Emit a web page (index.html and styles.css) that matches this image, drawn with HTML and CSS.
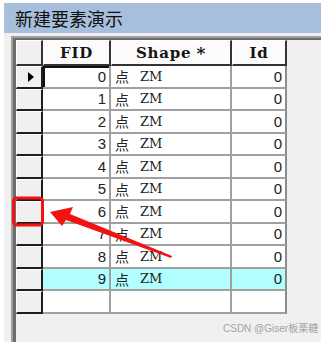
FILE: index.html
```html
<!DOCTYPE html>
<html lang="zh">
<head>
  <meta charset="UTF-8" />
  <title>新建要素演示</title>
  <link rel="stylesheet" href="styles.css">
</head>
<body>
  <div class="window">
    <div class="titlebar">新建要素演示</div>
    <div class="frame">
      <div class="inner">
        <div class="grid">
          <div class="hd corner"></div>
          <div class="hd">FID</div>
          <div class="hd">Shape <span class="star">*</span></div>
          <div class="hd last">Id</div>
        </div>
      </div>
    </div>
  </div>

  <svg class="marks" width="321" height="342" viewBox="0 0 321 342">
    <rect x="13.5" y="198" width="29" height="27" rx="3" fill="none" stroke="#f21212" stroke-width="3"/>
    <polygon points="50,212 73,207 70,214 172,256 171,258 66,220 62,226" fill="#f21212"/>
  </svg>
  <div class="watermark">CSDN @Giser板栗糖</div>

  <script>
    const rows = [];
    for (let i = 0; i < 10; i++) rows.push({ fid: i, shape: '点', kind: 'ZM', id: 0 });

    const grid = document.querySelector('.grid');
    rows.forEach((r, i) => {
      const hl = i === 9 ? ' hl' : '';
      grid.insertAdjacentHTML('beforeend', `
        <div class="sel">${i === 0 ? '<span class="ptr"></span>' : ''}</div>
        <div class="cell num${hl}${i === 0 ? ' current' : ''}">${r.fid}</div>
        <div class="cell txt${hl}">${r.shape}<span class="zm">${r.kind}</span></div>
        <div class="cell num last${hl}">${r.id}</div>
      `);
    });
    grid.insertAdjacentHTML('beforeend', `
      <div class="sel"></div>
      <div class="cell"></div>
      <div class="cell"></div>
      <div class="cell last"></div>
    `);
  </script>
</body>
</html>
```

FILE: styles.css
```css
* { box-sizing: border-box; }
body {
  margin: 0;
  width: 321px;
  height: 342px;
  overflow: hidden;
  background: #fff;
  position: relative;
  font-family: "Liberation Sans", "Noto Sans CJK SC", sans-serif;
  color: #1a1a1a;
}
.window {
  margin: 3px 0 0 4px;
  height: 339px;
  background: #f0f0f0;
  display: flex;
  flex-direction: column;
}
.titlebar {
  height: 30px;
  background: #a7bfdc;
  padding-left: 11px;
  font-size: 18px;
  line-height: 30px;
  color: #111;
  font-family: "Noto Sans CJK SC", sans-serif;
}
.frame {
  flex: 1;
  margin: 3px 0 0 7px;
  border-top: 2px solid #a0a0a0;
  border-left: 2px solid #a0a0a0;
}
.inner {
  height: 100%;
  border-top: 2px solid #6d6d6d;
  border-left: 3px solid #6d6d6d;
}
.grid {
  display: grid;
  grid-template-columns: 27px 68px 121px 55px;
  grid-template-rows: 26px repeat(11, 22.5px);
  width: max-content;
}
.hd {
  background: #fbfbfb;
  border-top: 1px solid #fff;
  border-left: 1px solid #fff;
  border-right: 2px solid #333;
  border-bottom: 2px solid #333;
  font-family: "DejaVu Serif", serif;
  font-weight: bold;
  font-size: 15px;
  letter-spacing: 0.8px;
  display: flex;
  align-items: center;
  justify-content: center;
  color: #151515;
}
.hd.corner { background: #f0f0f0; }
.hd .star { margin-left: 5px; font-size: 17px; }
.sel {
  background: #f0f0f0;
  border-top: 1px solid #fff;
  border-left: 1px solid #fff;
  border-right: 2px solid #1e1e1e;
  border-bottom: 2px solid #1e1e1e;
  display: flex;
  align-items: center;
  justify-content: center;
}
.ptr {
  margin-left: 4px;
  width: 0;
  height: 0;
  border-top: 5px solid transparent;
  border-bottom: 5px solid transparent;
  border-left: 6px solid #000;
}
.cell {
  background: #fff;
  border-right: 2px solid #a0a0a0;
  border-bottom: 2px solid #a0a0a0;
  font-size: 15px;
  display: flex;
  align-items: center;
  color: #222;
}
.cell.last { border-right-color: #8c8c8c; }
.cell.num { justify-content: flex-end; padding-right: 3px; }
.cell.txt {
  padding-left: 4px;
  font-family: "Noto Sans CJK SC", sans-serif;
  font-size: 14px;
}
.cell .zm {
  margin-left: 11px;
  font-family: "DejaVu Serif", serif;
  font-size: 13px;
}
.cell.hl { background: #b2ffff; }
.cell.current { box-shadow: inset 2px 2px 0 #111; }
.marks {
  position: absolute;
  left: 0;
  top: 0;
}
.watermark {
  position: absolute;
  left: 223px;
  top: 320px;
  font-size: 10px;
  color: #a3a3a3;
  font-family: "Liberation Sans", "Noto Sans CJK SC", sans-serif;
}
```
